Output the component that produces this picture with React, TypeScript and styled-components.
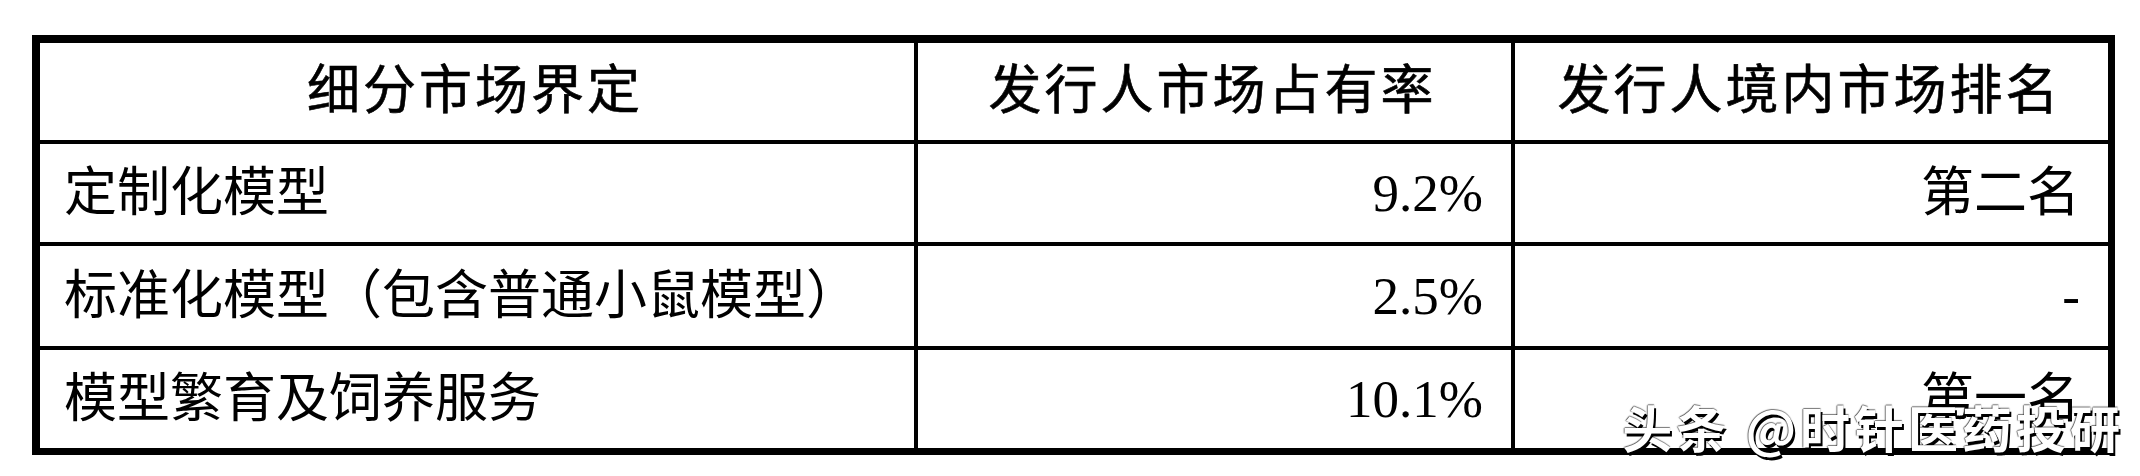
import React from 'react';
import styled, { createGlobalStyle } from 'styled-components';

const GlobalStyle = createGlobalStyle`
  html, body {
    margin: 0;
    padding: 0;
    background: #fff;
  }
  body {
    font-family: "Liberation Serif", "Noto Sans CJK SC", serif;
    color: #000;
  }
`;

type Align = 'left' | 'center' | 'right';

const headers = ['细分市场界定', '发行人市场占有率', '发行人境内市场排名'];

const rows = [
  { name: '定制化模型', share: '9.2%', rank: '第二名' },
  { name: '标准化模型（包含普通小鼠模型）', share: '2.5%', rank: '-' },
  { name: '模型繁育及饲养服务', share: '10.1%', rank: '第一名' },
];

const App = () => {
  return (
    <Page>
      <GlobalStyle />
      <Table>
        {headers.map((h) => (
          <HeaderCell key={h} $align="center">{h}</HeaderCell>
        ))}
        {rows.map((r) => (
          <React.Fragment key={r.name}>
            <Cell $align="left">{r.name}</Cell>
            <Cell $align="right">{r.share}</Cell>
            <Cell $align="right">{r.rank}</Cell>
          </React.Fragment>
        ))}
      </Table>
      <Watermark>头条 @时针医药投研</Watermark>
    </Page>
  );
};

const Page = styled.div`
  position: relative;
  width: 2140px;
  height: 476px;
  box-sizing: border-box;
  padding: 35px 0 0 32px;
  overflow: hidden;
  background: #fff;
`;

const Table = styled.div`
  display: grid;
  grid-template-columns: 874px 593px 593px;
  grid-template-rows: 97px 98px 100px 98px;
  gap: 4px;
  width: fit-content;
  background: #000;
  border-style: solid;
  border-color: #000;
  border-width: 8px 7px 7px 8px;
`;

const Cell = styled.div<{ $align: Align }>`
  display: flex;
  align-items: center;
  justify-content: ${(p) =>
    p.$align === 'left' ? 'flex-start' : p.$align === 'right' ? 'flex-end' : 'center'};
  padding: 0 28px 0 24px;
  background: #fff;
  font-size: 53px;
  line-height: 1;
  font-weight: 400;
  white-space: nowrap;
`;

const HeaderCell = styled(Cell)`
  letter-spacing: 3px;
  -webkit-text-stroke: 0.6px #000;
`;

const Watermark = styled.div`
  position: absolute;
  right: 16px;
  top: 401px;
  font-family: "Noto Sans CJK SC", sans-serif;
  font-size: 50px;
  line-height: 50px;
  letter-spacing: 4px;
  font-weight: 700;
  color: #fff;
  white-space: nowrap;
  text-shadow:
    2px 3px 0 #000,
    -1px 0 1px rgba(0, 0, 0, 0.5),
    0 -1px 1px rgba(0, 0, 0, 0.5);
`;

export default App;
